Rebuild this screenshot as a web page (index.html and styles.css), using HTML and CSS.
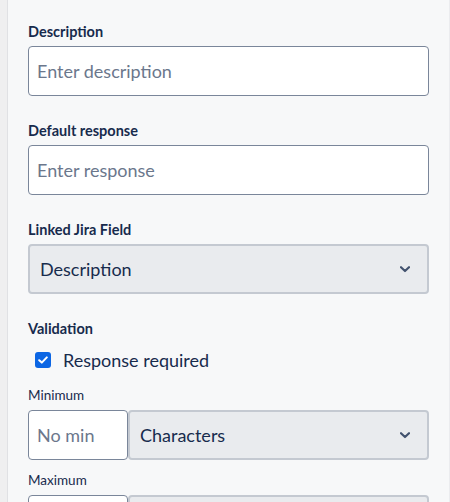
FILE: index.html
```html
<!DOCTYPE html>
<html lang="en">
<head>
<meta charset="utf-8">
<title>Field settings</title>
<link rel="stylesheet" href="styles.css">
</head>
<body>
<div class="frame">
  <aside class="gutter"></aside>
  <main class="panel">
    <div class="field">
      <label class="label" for="desc">Description</label>
      <input class="text-input" id="desc" type="text" placeholder="Enter description">
    </div>
    <div class="field">
      <label class="label" for="resp">Default response</label>
      <input class="text-input" id="resp" type="text" placeholder="Enter response">
    </div>
    <div class="field">
      <label class="label" for="jira">Linked Jira Field</label>
      <div class="select-wrap">
        <select class="select" id="jira"><option>Description</option></select>
        <svg class="chevron" width="10" height="7" viewBox="0 0 10 7"><path d="M1 1.2 L5 5 L9 1.2" fill="none" stroke="#42526e" stroke-width="2.2" stroke-linecap="round" stroke-linejoin="round"/></svg>
      </div>
    </div>
    <div class="field validation">
      <div class="label">Validation</div>
      <label class="check-row">
        <span class="checkbox"><svg width="10" height="8" viewBox="0 0 10 8"><path d="M1.2 4.2 L3.8 6.6 L8.8 1.4" fill="none" stroke="#fff" stroke-width="2" stroke-linecap="round" stroke-linejoin="round"/></svg></span>
        <span class="check-text">Response required</span>
      </label>
      <div class="range">
        <div class="sub-label">Minimum</div>
        <div class="combo">
          <input class="text-input num" type="text" placeholder="No min">
          <div class="select-wrap grow">
            <select class="select"><option>Characters</option></select>
            <svg class="chevron" width="10" height="7" viewBox="0 0 10 7"><path d="M1 1.2 L5 5 L9 1.2" fill="none" stroke="#42526e" stroke-width="2.2" stroke-linecap="round" stroke-linejoin="round"/></svg>
          </div>
        </div>
      </div>
      <div class="range">
        <div class="sub-label">Maximum</div>
        <div class="combo">
          <input class="text-input num" type="text" placeholder="No max">
          <div class="select-wrap grow">
            <select class="select"><option>Characters</option></select>
            <svg class="chevron" width="10" height="7" viewBox="0 0 10 7"><path d="M1 1.2 L5 5 L9 1.2" fill="none" stroke="#42526e" stroke-width="2.2" stroke-linecap="round" stroke-linejoin="round"/></svg>
          </div>
        </div>
      </div>
    </div>
  </main>
</div>
</body>
</html>
```

FILE: styles.css
```css
* { box-sizing: border-box; }
html, body {
  margin: 0;
  height: 100%;
  overflow: hidden;
}
body {
  font-family: Lato, "Liberation Sans", sans-serif;
  color: #172b4d;
  background: #f0f0f1;
}
.frame {
  display: flex;
  height: 502px;
  overflow: hidden;
}
.gutter {
  width: 8px;
  flex: none;
  background: #efeff0;
  border-right: 1px solid #e0e1e4;
}
.panel {
  width: 442px;
  flex: none;
  background: #f7f8f9;
  border-right: 1px solid #ebecef;
  padding: 22px 20px 0 20px;
  display: flex;
  flex-direction: column;
  gap: 25px;
  overflow: hidden;
}
.field {
  display: flex;
  flex-direction: column;
  flex: none;
}
.label {
  font-size: 14.5px;
  font-weight: 700;
  line-height: 20px;
  margin-bottom: 4px;
  color: #172b4d;
}
.text-input {
  height: 50px;
  width: 100%;
  border: 1.5px solid #7a869a;
  border-radius: 4px;
  background: #fff;
  padding: 0 8px;
  font-family: inherit;
  font-size: 18px;
  color: #172b4d;
  outline: none;
}
.text-input::placeholder {
  color: #6b778c;
}
.select-wrap {
  position: relative;
}
.select {
  appearance: none;
  -webkit-appearance: none;
  width: 100%;
  height: 50px;
  border: 2px solid #c4c9d1;
  border-radius: 4px;
  background: #e9ebee;
  padding: 0 10px;
  font-family: inherit;
  font-size: 18px;
  color: #172b4d;
  outline: none;
}
.chevron {
  position: absolute;
  right: 19px;
  top: 22px;
  pointer-events: none;
}
.validation .label {
  margin-bottom: 13px;
}
.check-row {
  display: flex;
  align-items: center;
  gap: 12px;
  padding-left: 7px;
  height: 16px;
}
.checkbox {
  width: 16px;
  height: 16px;
  border-radius: 3px;
  background: #0c66e4;
  display: flex;
  align-items: center;
  justify-content: center;
}
.check-text {
  font-size: 18px;
  color: #172b4d;
}
.range {
  margin-top: 17px;
  display: flex;
  flex-direction: column;
}
.range + .range {
  margin-top: 10px;
}
.sub-label {
  font-size: 13.5px;
  line-height: 20px;
  margin-bottom: 5px;
  color: #172b4d;
}
.combo {
  display: flex;
}
.text-input.num {
  width: 100px;
  flex: none;
}
.grow {
  flex: 1;
}
```
